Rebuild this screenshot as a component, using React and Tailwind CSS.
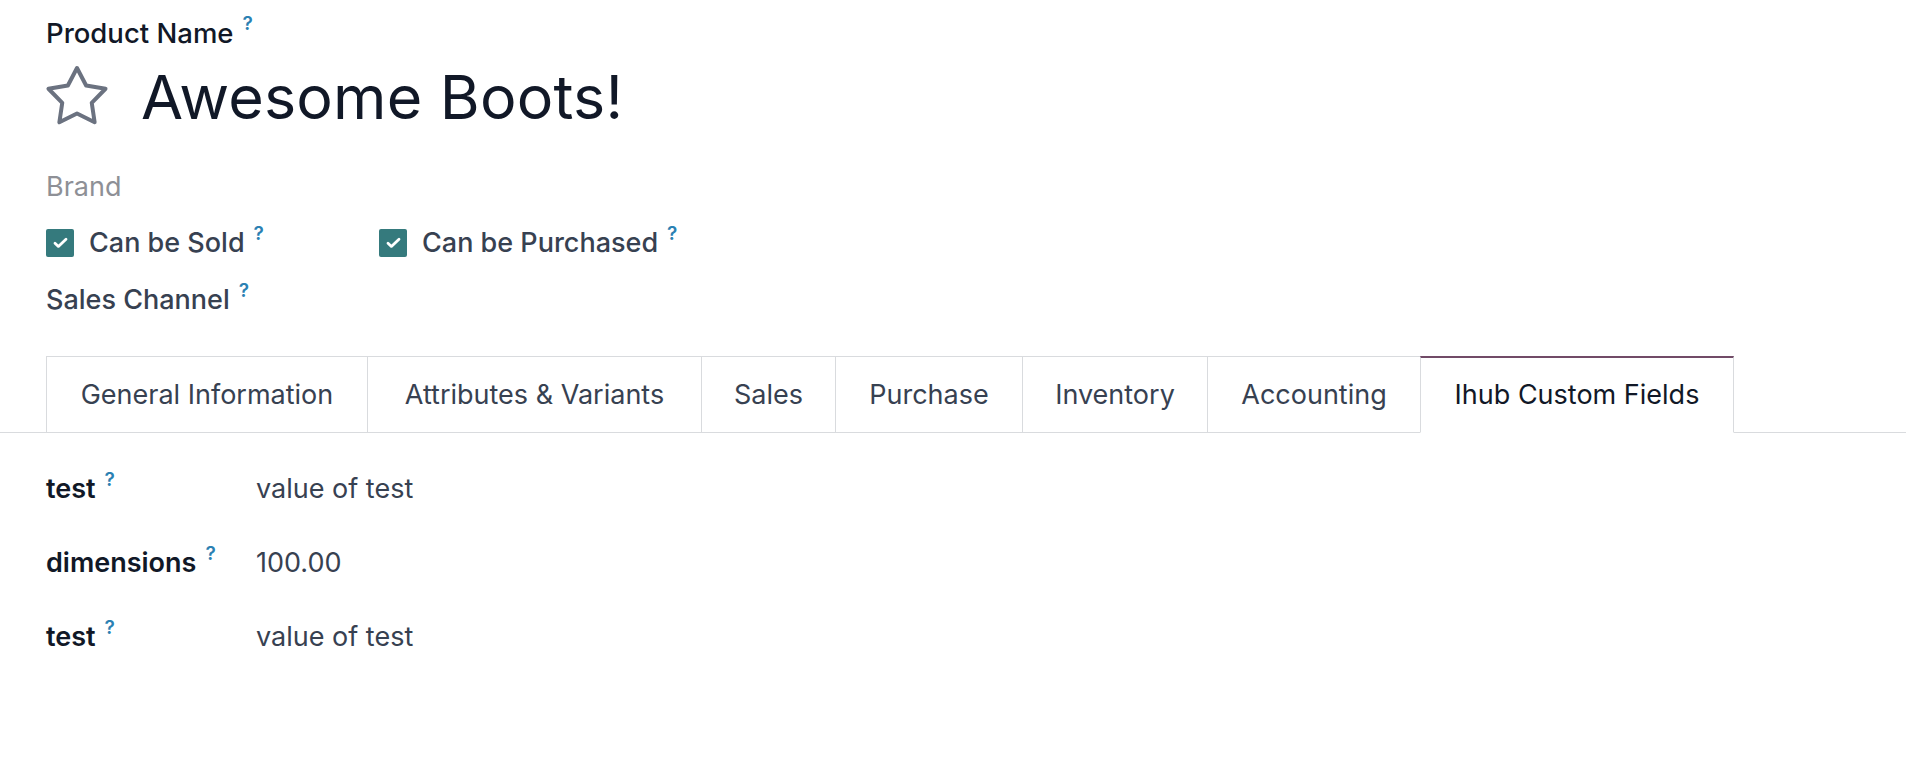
import React from "react";

const Help = () => (
  <span className="ml-[9px] mt-[1px] text-[19px] leading-none font-semibold text-[#2b81b3]">?</span>
);

const Check = () => (
  <span className="flex h-[28px] w-[28px] items-center justify-center rounded-[2px] bg-[#357a7d]">
    <svg width="15" height="12" viewBox="0 0 15 12" fill="none">
      <path d="M2 6.2l3.4 3.2L13 2.2" stroke="#fff" strokeWidth="2.8" strokeLinecap="round" strokeLinejoin="round" />
    </svg>
  </span>
);

const StarOutline = () => (
  <svg width="64" height="64" viewBox="0 0 64 64" fill="none" className="ml-[-1px] shrink-0">
    <polygon
      points="32,3 41.11,20.46 60.53,23.73 46.74,37.79 49.63,57.27 32,48.5 14.37,57.27 17.26,37.79 3.47,23.73 22.89,20.46"
      stroke="#6b7280"
      strokeWidth="4"
      strokeLinejoin="round"
    />
  </svg>
);

const tabs = [
  { label: "General Information", w: "w-[321px]" },
  { label: "Attributes & Variants", w: "w-[334px]" },
  { label: "Sales", w: "w-[134px]" },
  { label: "Purchase", w: "w-[187px]" },
  { label: "Inventory", w: "w-[185px]" },
  { label: "Accounting", w: "w-[213px]" },
  { label: "Ihub Custom Fields", w: "w-[314px]", active: true },
];

const rows = [
  { label: "test", value: "value of test" },
  { label: "dimensions", value: "100.00" },
  { label: "test", value: "value of test" },
];

export default function App() {
  return (
    <div className="min-h-screen bg-white font-['Inter','Noto_Sans',sans-serif] text-[27px]">
      {/* Header fields */}
      <div className="px-[46px] pt-[13px]">
        <div className="flex items-start">
          <span className="leading-[40px] font-medium text-[#111827] text-[27.5px]">Product Name</span>
          <Help />
        </div>

        <div className="flex h-[88px] items-center gap-[32px]">
          <StarOutline />
          <h1 className="text-[61px] leading-none font-normal text-[#111827] tracking-[0.2px]">Awesome Boots!</h1>
        </div>

        <div className="mt-[26px] leading-[40px] text-[#8e9096]">Brand</div>

        <div className="mt-[16px] flex h-[40px] items-center">
          <div className="flex w-[333px] items-center">
            <Check />
            <div className="ml-[15px] flex items-start">
              <span className="leading-[40px] font-medium text-[#374151]">Can be Sold</span>
              <Help />
            </div>
          </div>
          <div className="flex items-center">
            <Check />
            <div className="ml-[15px] flex items-start">
              <span className="leading-[40px] font-medium text-[#374151]">Can be Purchased</span>
              <Help />
            </div>
          </div>
        </div>

        <div className="mt-[17px] flex items-start">
          <span className="leading-[40px] font-medium text-[#374151]">Sales Channel</span>
          <Help />
        </div>
      </div>

      {/* Notebook */}
      <div className="mt-[36px] border-b border-[#d9dbde] pl-[46px]">
        <div className="flex">
          {tabs.map((t) => (
            <div
              key={t.label}
              className={`-mb-px flex h-[77px] items-center justify-center border-l border-[#d9dbde] ${t.w} ${
                t.active
                  ? "border-r border-t-2 border-t-[#714b67] border-b border-b-white bg-white text-[#111827]"
                  : "border-t text-[#374151]"
              }`}
            >
              {t.label}
            </div>
          ))}
        </div>
      </div>

      {/* Tab content */}
      <div className="px-[46px] pt-[36px]">
        {rows.map((r, i) => (
          <div key={i} className={`flex h-[40px] items-center ${i > 0 ? "mt-[34px]" : ""}`}>
            <div className="flex w-[210px] items-start self-stretch">
              <span className="leading-[40px] font-semibold text-[#111827]">{r.label}</span>
              <Help />
            </div>
            <div className="leading-[40px] text-[#374151]">{r.value}</div>
          </div>
        ))}
      </div>
    </div>
  );
}
